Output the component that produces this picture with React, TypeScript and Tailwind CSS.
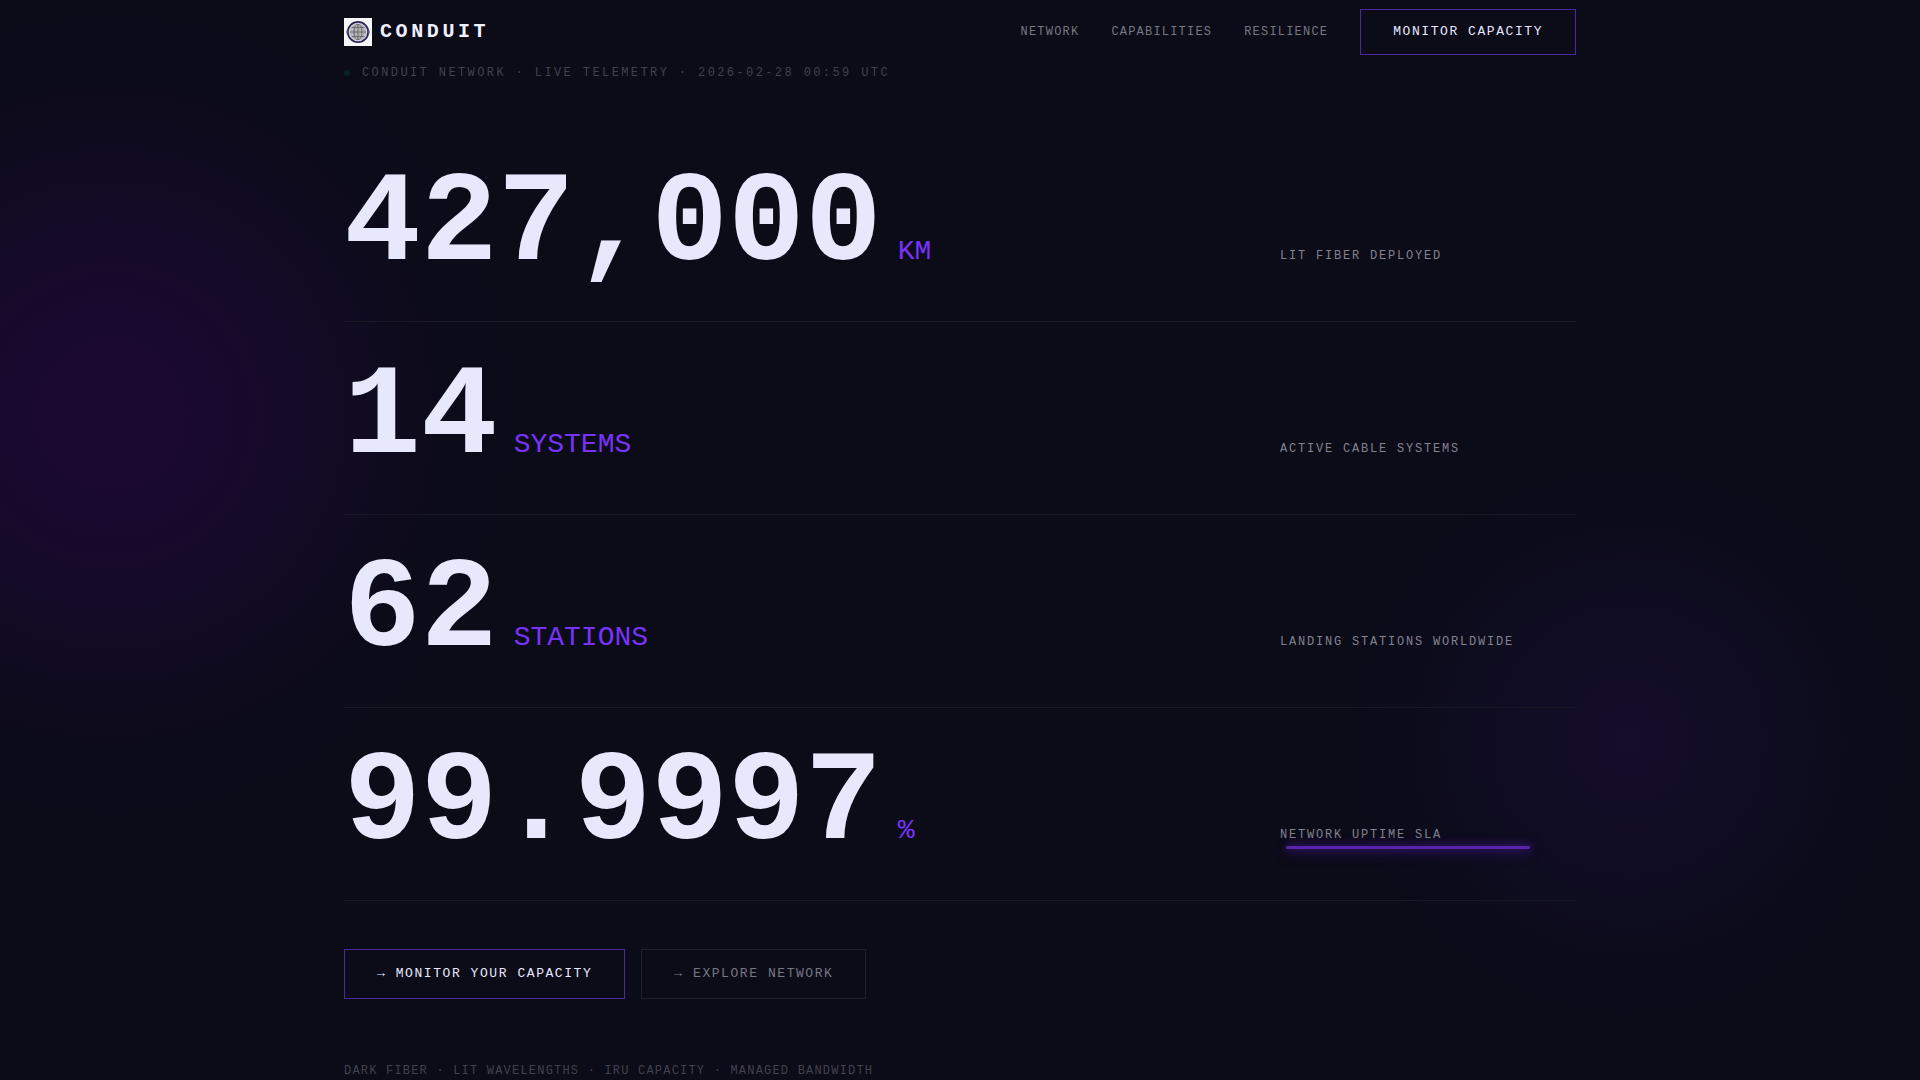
type Stat = { value: string; unit: string; label: string };

const NAV_LINKS = ['Network', 'Capabilities', 'Resilience'];

const STATS: Stat[] = [
  { value: '427,000', unit: 'KM', label: 'Lit fiber deployed' },
  { value: '14', unit: 'SYSTEMS', label: 'Active cable systems' },
  { value: '62', unit: 'STATIONS', label: 'Landing stations worldwide' },
  { value: '99.9997', unit: '%', label: 'Network uptime SLA' },
];

const Logo = () => (
  <svg viewBox="0 0 28 28" className="h-7 w-7 shrink-0" aria-hidden="true">
    <rect width="28" height="28" fill="#f7f7fb" />
    <circle cx="14" cy="14" r="9" fill="#b4b4b8" />
    <g fill="none" stroke="#5a5a60" strokeWidth="0.8">
      <ellipse cx="14" cy="14" rx="4" ry="8" />
      <path d="M14 6v16M6 14h16M7.5 9.5h13M7.5 18.5h13" />
    </g>
    <circle cx="14" cy="14" r="8.6" fill="none" stroke="#d6d6dc" strokeWidth="0.8" />
    <circle cx="14" cy="14" r="10.2" fill="none" stroke="#2b2458" strokeWidth="1.8" />
    <path d="M2.2 14h1.6M24.2 14h1.6" stroke="#6a6590" strokeWidth="3" />
  </svg>
);

// Soft colour washes behind the content. Purely decorative.
const Backdrop = () => (
  <div className="pointer-events-none absolute inset-0 overflow-hidden" aria-hidden="true">
    <div className="absolute top-0 -left-[304px] size-[830px] rounded-full bg-[radial-gradient(closest-side,#1c0930,#1a092e_25%,#150a29_42%,#100b21_60%,#0c0b1a_82%,#0c0b18)]" />
    <div className="absolute top-[456px] left-[1344px] size-[570px] rounded-full bg-[radial-gradient(closest-side,#150d2b,#110d24_35%,#0e0c1f_60%,#0b0b19_90%,#0c0b18)]" />
  </div>
);

const Header = () => (
  <header className="flex h-[65px] items-center justify-between border-b border-transparent">
    <a href="#top" className="flex items-center gap-2 text-xl leading-6 font-bold tracking-[0.18em] text-[#f0f0ff]">
      <Logo />
      CONDUIT
    </a>
    <nav className="flex items-center gap-8 text-xs tracking-widest text-[#777783] uppercase">
      {NAV_LINKS.map((link) => (
        <a key={link} href={`#${link.toLowerCase()}`} className="hover:text-[#e8e8ff]">
          {link}
        </a>
      ))}
      <a
        href="#monitor"
        className="border border-[#4c2a9a] px-8 py-3 text-[13px] leading-5 tracking-[0.12em] text-[#e8e8ff]"
      >
        Monitor capacity
      </a>
    </nav>
  </header>
);

const StatRow = ({ value, unit, label }: Stat) => (
  <div className="grid grid-cols-[3fr_1fr] items-baseline gap-12 border-b border-[#191825] py-8">
    <dd className="flex items-baseline gap-4 text-9xl leading-none font-bold text-[#e8e8fd]">
      {value}
      <span className="text-[28px] leading-8 font-normal text-[#7833f8]">{unit}</span>
    </dd>
    <dt className="text-xs tracking-[0.15em] text-[#83828f] uppercase">{label}</dt>
  </div>
);

export default function App() {
  return (
    <div id="top" className="relative min-h-screen overflow-hidden bg-[#0c0b18] font-['Liberation_Mono',monospace]">
      <Backdrop />
      <div className="relative mx-auto max-w-7xl px-6">
        <Header />
        <main>
          <p className="flex items-center gap-3 text-xs tracking-[0.2em] text-[#42414d] uppercase">
            <span className="size-1.5 rounded-full bg-[#07222a]" />
            Conduit network · Live telemetry · 2026-02-28 00:59 UTC
          </p>
          <dl className="mt-12">
            {STATS.map((stat) => (
              <StatRow key={stat.label} {...stat} />
            ))}
          </dl>
          <div className="mt-12 flex gap-4 text-[13px] leading-4 tracking-[0.12em]">
            <button type="button" className="border border-[#4c2a9a] px-8 py-4 text-[#e8e8ff] uppercase">
              → Monitor your capacity
            </button>
            <button type="button" className="border border-[#20202c] px-8 py-4 text-[#777783] uppercase">
              → Explore network
            </button>
          </div>
          <p className="mt-16 text-xs tracking-widest text-[#42414d] uppercase">
            Dark fiber · Lit wavelengths · IRU capacity · Managed bandwidth
          </p>
        </main>
      </div>
      <div
        className="pointer-events-none absolute top-[846px] left-[67%] h-[3px] w-[244px] rounded-full bg-[#5924ac] shadow-[0_0_8px_#4a1a9c,0_3px_14px_#4a1a9cb3]"
        aria-hidden="true"
      />
    </div>
  );
}
